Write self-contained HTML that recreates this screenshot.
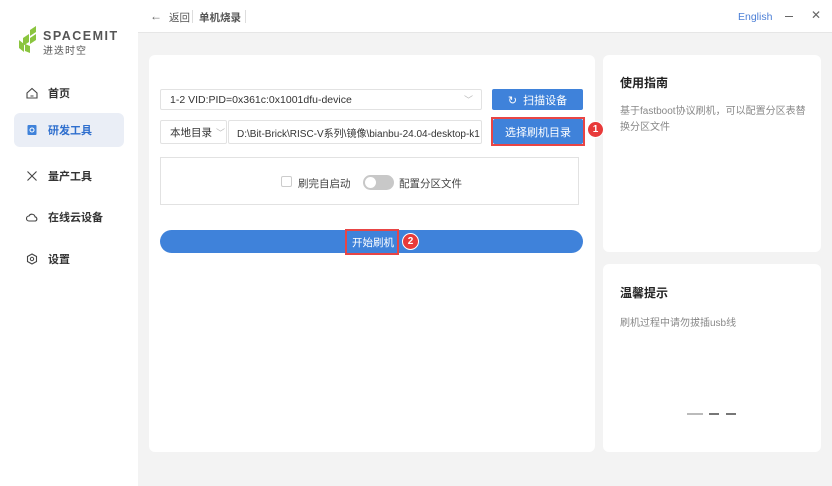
<!DOCTYPE html>
<html><head><meta charset="utf-8"><style>
*{margin:0;padding:0;box-sizing:border-box}
body{width:832px;height:486px;background:#f3f3f3;font-family:"Liberation Sans","Noto Sans CJK SC",sans-serif;font-size:11px;color:#333;position:relative;overflow:hidden}
.abs{position:absolute}
.side{left:0;top:0;width:138px;height:486px;background:#fff}
.nav{left:14px;width:110px;height:34px;display:flex;align-items:center;padding-left:12px;font-size:11px;font-weight:bold;color:#333}
.nav svg{margin-right:10px}
.hdr{left:138px;top:0;width:694px;height:33px;background:#fff;border-bottom:1px solid #e6e6e6}
.card{background:#fff;border-radius:6px}
.inp{background:#fff;border:1px solid #e2e2e2;border-radius:2px;display:flex;align-items:center;padding-left:9px;font-size:10.5px;color:#333}
.btn{background:#3f82da;color:#fff;border-radius:2px;display:flex;align-items:center;justify-content:center;font-size:11px}
.badge{width:17px;height:17px;border-radius:50%;background:#e83a3a;color:#fff;font-size:10px;font-weight:bold;display:flex;align-items:center;justify-content:center;border:1px solid #fff}
</style></head><body>
<div class="abs" style="left:0;top:0;width:832px;height:1px;background:#666"></div>
<div class="abs side">
 <svg class="abs" style="left:17px;top:26px" width="30" height="28" viewBox="0 0 30 28"><path d="M13 4 L19 0 L19 6 L13 10Z M6 12 L12 8 L12 16 L6 20Z M13 12 L19 8 L19 14 L13 18Z M2 14 L7 18 L7 26 L2 22Z M8 18 L13 20 L13 27 L8 25Z" fill="#8bc53f"/></svg>
 <div class="abs" style="left:43px;top:29px;font-size:12.5px;font-weight:bold;letter-spacing:1.5px;color:#555">SPACEMIT</div>
 <div class="abs" style="left:43px;top:42px;font-size:10px;color:#555;letter-spacing:1px">进迭时空</div>
 <div class="abs nav" style="top:76px"><svg width="12" height="12" viewBox="0 0 12 12"><path d="M1 6 L6 1.5 L11 6 V11 H1Z M4.5 9 H7.5" fill="none" stroke="#444" stroke-width="1.1"/></svg>首页</div>
 <div class="abs nav" style="top:113px;background:#eaeef6;border-radius:6px;color:#2f6fce"><svg width="12" height="12" viewBox="0 0 12 12"><rect x="1.5" y="1" width="9" height="10" rx="1" fill="#3f82da"/><circle cx="6" cy="6" r="2" fill="none" stroke="#fff"/></svg>研发工具</div>
 <div class="abs nav" style="top:159px"><svg width="12" height="12" viewBox="0 0 12 12"><path d="M1.5 1.5 L10.5 10.5 M10.5 1.5 L1.5 10.5" stroke="#444" stroke-width="1.1"/></svg>量产工具</div>
 <div class="abs nav" style="top:200px"><svg width="12" height="12" viewBox="0 0 12 12"><path d="M3 10 H9.5 A2.2 2.2 0 0 0 9 5.8 A3.2 3.2 0 0 0 3 5 A2.5 2.5 0 0 0 3 10Z" fill="none" stroke="#444" stroke-width="1.1"/></svg>在线云设备</div>
 <div class="abs nav" style="top:242px"><svg width="12" height="12" viewBox="0 0 12 12"><path d="M6 1 L10.5 3.5 V8.5 L6 11 L1.5 8.5 V3.5Z" fill="none" stroke="#444" stroke-width="1.1"/><circle cx="6" cy="6" r="1.7" fill="none" stroke="#444"/></svg>设置</div>
</div>
<div class="abs hdr">
 <div class="abs" style="left:12px;top:9px;color:#666;font-size:12px">←</div>
 <div class="abs" style="left:31px;top:10px;color:#555;font-size:10.5px">返回</div>
 <div class="abs" style="left:54px;top:10px;width:1px;height:13px;background:#ddd"></div>
 <div class="abs" style="left:61px;top:10px;color:#555;font-size:10.5px;font-weight:bold">单机烧录</div>
 <div class="abs" style="left:107px;top:10px;width:1px;height:13px;background:#ddd"></div>
 <div class="abs" style="left:600px;top:11px;color:#4c7fd6;font-size:10.5px">English</div>
 <div class="abs" style="left:647px;top:16px;width:8px;height:1px;background:#666"></div>
 <div class="abs" style="left:673px;top:8px;color:#666;font-size:12px">✕</div>
</div>
<div class="abs card" style="left:149px;top:55px;width:446px;height:397px"></div>
<div class="abs inp" style="left:160px;top:89px;width:322px;height:21px">1-2 VID:PID=0x361c:0x1001dfu-device<span style="position:absolute;right:8px;color:#bbb;font-size:9px">﹀</span></div>
<div class="abs btn" style="left:492px;top:89px;width:91px;height:21px">↻&nbsp; 扫描设备</div>
<div class="abs inp" style="left:160px;top:120px;width:67px;height:24px">本地目录 <span style="color:#bbb;font-size:9px;margin-left:4px">﹀</span></div>
<div class="abs inp" style="left:228px;top:120px;width:254px;height:24px;white-space:nowrap;overflow:hidden;font-size:10px;padding-left:8px">D:\Bit-Brick\RISC-V系列\镜像\bianbu-24.04-desktop-k1</div>
<div class="abs" style="left:491px;top:117px;width:94px;height:29px;border:2px solid #e84545"></div>
<div class="abs btn" style="left:493px;top:119px;width:90px;height:25px">选择刷机目录</div>
<div class="abs badge" style="left:587px;top:121px">1</div>
<div class="abs" style="left:160px;top:157px;width:419px;height:48px;border:1px solid #e2e2e2;background:#fff"></div>
<div class="abs" style="left:281px;top:176px;width:11px;height:11px;border:1px solid #ccc;border-radius:2px"></div>
<div class="abs" style="left:298px;top:176px;font-size:10.5px;color:#444">刷完自启动</div>
<div class="abs" style="left:363px;top:175px;width:31px;height:15px;border-radius:8px;background:#c8c8c8"><div style="position:absolute;left:2px;top:2px;width:11px;height:11px;border-radius:50%;background:#fff"></div></div>
<div class="abs" style="left:399px;top:176px;font-size:10.5px;color:#444">配置分区文件</div>
<div class="abs btn" style="left:160px;top:230px;width:423px;height:23px;border-radius:12px"></div>
<div class="abs" style="left:345px;top:229px;width:54px;height:26px;border:2px solid #e84545"></div>
<div class="abs" style="left:352px;top:235px;color:#fff;font-size:10.5px">开始刷机</div>
<div class="abs badge" style="left:402px;top:233px">2</div>
<div class="abs card" style="left:603px;top:55px;width:218px;height:197px"></div>
<div class="abs" style="left:620px;top:74px;font-size:12px;font-weight:bold;color:#222">使用指南</div>
<div class="abs" style="left:620px;top:104px;width:190px;font-size:10px;line-height:16px;color:#888">基于fastboot协议刷机，可以配置分区表替换分区文件</div>
<div class="abs card" style="left:603px;top:264px;width:218px;height:188px"></div>
<div class="abs" style="left:620px;top:284px;font-size:12px;font-weight:bold;color:#222">温馨提示</div>
<div class="abs" style="left:620px;top:314px;font-size:10px;color:#888">刷机过程中请勿拔插usb线</div>
<div class="abs" style="left:687px;top:413px;width:16px;height:2px;background:#bbb"></div>
<div class="abs" style="left:709px;top:413px;width:10px;height:2px;background:#777"></div>
<div class="abs" style="left:726px;top:413px;width:10px;height:2px;background:#777"></div>
</body></html>
